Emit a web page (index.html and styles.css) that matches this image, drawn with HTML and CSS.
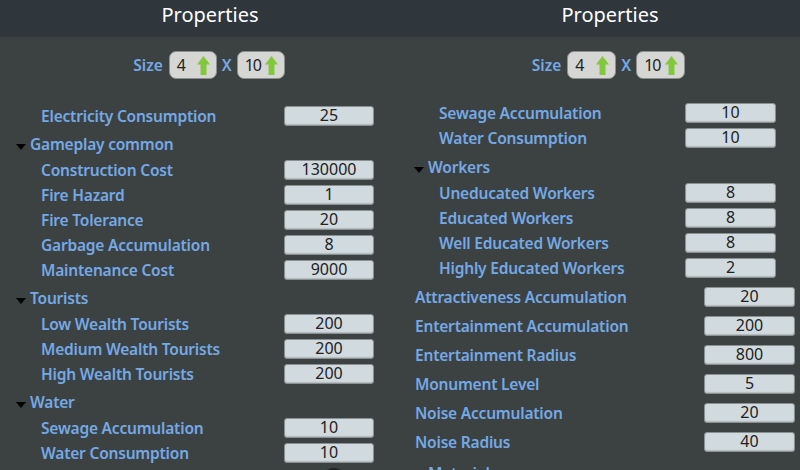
FILE: index.html
```html
<!DOCTYPE html>
<html lang="en">

<head>
  <meta charset="UTF-8" />
  <title>Properties</title>
  <link rel="stylesheet" href="styles.css">
</head>

<body>
  <!-- left panel -->
  <section class="panel">
    <h2 class="title">Properties</h2>
    <div class="size">
      <span class="lbl">Size</span>
      <span class="stepper"><span class="num">4</span><svg class="up" viewBox="0 0 13 19"><path d="M6.5 0 13 8.5H9.5V19H3.5V8.5H0Z"/></svg></span>
      <span class="lbl">X</span>
      <span class="stepper"><span class="num">10</span><svg class="up" viewBox="0 0 13 19"><path d="M6.5 0 13 8.5H9.5V19H3.5V8.5H0Z"/></svg></span>
    </div>
    <div class="list">
      <div class="row"><span class="lbl">Electricity Consumption</span><span class="field">25</span></div>
      <div class="group">Gameplay common</div>
      <div class="row"><span class="lbl">Construction Cost</span><span class="field">130000</span></div>
      <div class="row"><span class="lbl">Fire Hazard</span><span class="field">1</span></div>
      <div class="row"><span class="lbl">Fire Tolerance</span><span class="field">20</span></div>
      <div class="row"><span class="lbl">Garbage Accumulation</span><span class="field">8</span></div>
      <div class="row"><span class="lbl">Maintenance Cost</span><span class="field">9000</span></div>
      <div class="group">Tourists</div>
      <div class="row"><span class="lbl">Low Wealth Tourists</span><span class="field">200</span></div>
      <div class="row"><span class="lbl">Medium Wealth Tourists</span><span class="field">200</span></div>
      <div class="row"><span class="lbl">High Wealth Tourists</span><span class="field">200</span></div>
      <div class="group">Water</div>
      <div class="row"><span class="lbl">Sewage Accumulation</span><span class="field">10</span></div>
      <div class="row"><span class="lbl">Water Consumption</span><span class="field">10</span></div>
    </div>
  </section>

  <!-- right panel -->
  <section class="panel panel-r">
    <h2 class="title">Properties</h2>
    <div class="size">
      <span class="lbl">Size</span>
      <span class="stepper"><span class="num">4</span><svg class="up" viewBox="0 0 13 19"><path d="M6.5 0 13 8.5H9.5V19H3.5V8.5H0Z"/></svg></span>
      <span class="lbl">X</span>
      <span class="stepper"><span class="num">10</span><svg class="up" viewBox="0 0 13 19"><path d="M6.5 0 13 8.5H9.5V19H3.5V8.5H0Z"/></svg></span>
    </div>
    <div class="list">
      <div class="row"><span class="lbl">Sewage Accumulation</span><span class="field">10</span></div>
      <div class="row"><span class="lbl">Water Consumption</span><span class="field">10</span></div>
      <div class="group">Workers</div>
      <div class="row"><span class="lbl">Uneducated Workers</span><span class="field">8</span></div>
      <div class="row"><span class="lbl">Educated Workers</span><span class="field">8</span></div>
      <div class="row"><span class="lbl">Well Educated Workers</span><span class="field">8</span></div>
      <div class="row"><span class="lbl">Highly Educated Workers</span><span class="field">2</span></div>
      <div class="top">
        <div class="row"><span class="lbl">Attractiveness Accumulation</span><span class="field">20</span></div>
        <div class="row"><span class="lbl">Entertainment Accumulation</span><span class="field">200</span></div>
        <div class="row"><span class="lbl">Entertainment Radius</span><span class="field">800</span></div>
        <div class="row"><span class="lbl">Monument Level</span><span class="field">5</span></div>
        <div class="row"><span class="lbl">Noise Accumulation</span><span class="field">20</span></div>
        <div class="row"><span class="lbl">Noise Radius</span><span class="field">40</span></div>
      </div>
      <div class="group">Material</div>
    </div>
  </section>

  <!-- top of the next row, cut off by the window -->
  <span class="cut"></span>
</body>

</html>
```

FILE: styles.css
```css
/* reset */
html,
body {
  margin: 0;
  padding: 0;
}

body {
  position: relative;
  display: flex;
  width: 800px;
  height: 470px;
  overflow: hidden;
  background-color: #3c4242;
  font-family: "Noto Sans", sans-serif;
  font-size: 15.5px;
}

.panel {
  width: 400px;
}

.title {
  height: 37px;
  margin: 0;
  padding-left: 20px;
  box-sizing: border-box;
  background-color: #2f373d;
  color: #fff;
  font-size: 20px;
  font-weight: normal;
  line-height: 30px;
  text-align: center;
}

/* size line */
.size {
  display: flex;
  justify-content: center;
  align-items: center;
  gap: 5px;
  height: 28px;
  margin-top: 14px;
  padding-left: 18px;
}

.size .lbl:first-child {
  margin-right: 1px;
}

.lbl {
  color: #75a9e6;
  font-weight: 600;
}

.stepper {
  display: flex;
  align-items: center;
  justify-content: space-between;
  box-sizing: border-box;
  width: 48px;
  height: 28px;
  padding: 0 6px 0 7px;
  background-color: #d6d6d4;
  border: 1px solid #8c8f8f;
  border-radius: 7px;
  color: #222;
}

.num {
  font-size: 16px;
  letter-spacing: -1px;
}

.up {
  width: 13px;
  height: 19px;
  fill: #83c83c;
}

/* rows */
.list {
  margin-top: 24px;
}

.row {
  display: flex;
  align-items: center;
  justify-content: space-between;
  height: 25px;
  padding-left: 41px;
  padding-right: 26px;
  letter-spacing: -.2px;
}

.field {
  box-sizing: border-box;
  width: 90px;
  height: 20px;
  background-color: #d1dade;
  border: 1px solid #899192;
  border-radius: 3px;
  box-shadow: inset 0 -1px 1px #b3bbbd;
  color: #222;
  font-size: 16px;
  letter-spacing: 0;
  line-height: 16px;
  text-align: center;
}

.group {
  display: flex;
  align-items: center;
  box-sizing: border-box;
  height: 29px;
  padding-top: 3px;
  padding-left: 16px;
  color: #75a9e6;
  font-weight: 600;
  letter-spacing: -.2px;
}

.group::before {
  content: '';
  width: 0;
  height: 0;
  margin: 6px 4px 0 0;
  border: 5px solid transparent;
  border-top: 6px solid #000;
  border-bottom: 0;
}

/* right panel offsets */
.panel-r .size {
  padding-left: 17px;
}

.panel-r .stepper {
  width: 49px;
}

.panel-r .list {
  margin-top: 21px;
}

.panel-r .row {
  padding-left: 39px;
  padding-right: 24px;
}

.panel-r .field {
  width: 91px;
}

.panel-r .group {
  height: 30px;
  padding-left: 14px;
}

.panel-r .top {
  margin-top: 2px;
}

.panel-r .top .row {
  height: 29px;
  padding-left: 15px;
  padding-right: 5px;
}

.cut {
  position: absolute;
  left: 327px;
  top: 468px;
  width: 14px;
  height: 6px;
  border-radius: 50%;
  background-color: #222;
}
```
